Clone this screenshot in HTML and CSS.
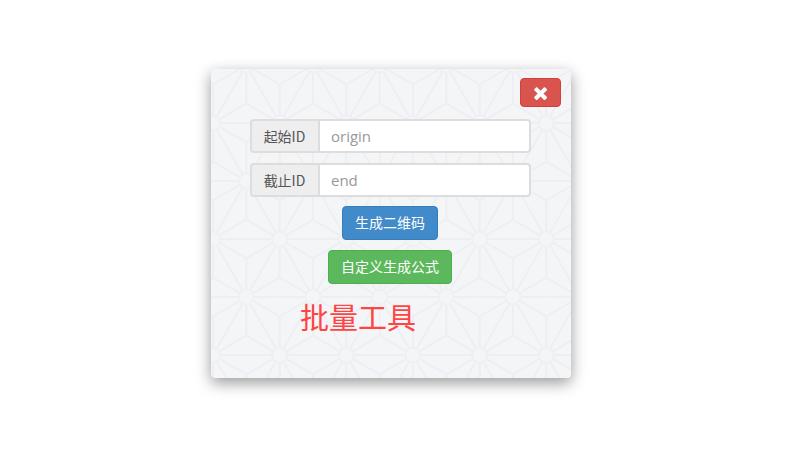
FILE: index.html
```html
<!DOCTYPE html>
<html lang="en">

<head>
    <meta charset="UTF-8">
    <meta name="viewport" content="width=device-width, initial-scale=1">
    <title>批量工具</title>
    <link rel="stylesheet" href="styles.css">
</head>

<body>

    <div class="modal">
        <div class="modal-head">
            <button type="button" class="btn btn-close" aria-label="close">
                <svg class="icon-times" viewBox="282 256 1208 1300" width="13" height="14" aria-hidden="true">
                    <path fill="#fff" d="M1490 1322q0 40-28 68l-136 136q-28 28-68 28t-68-28l-294-294-294 294q-28 28-68 28t-68-28l-136-136q-28-28-28-68t28-68l294-294-294-294q-28-28-28-68t28-68l136-136q28-28 68-28t68 28l294 294 294-294q28-28 68-28t68 28l136 136q28 28 28 68t-28 68l-294 294 294 294q28 28 28 68z" />
                </svg>
            </button>
        </div>

        <form class="id-form">
            <div class="input-group">
                <label class="addon" for="origin">起始ID</label>
                <input type="text" id="origin" placeholder="origin" />
            </div>
            <div class="input-group">
                <label class="addon" for="end">截止ID</label>
                <input type="text" id="end" placeholder="end" />
            </div>
            <button type="button" class="btn btn-blue">生成二维码</button>
            <button type="button" class="btn btn-green">自定义生成公式</button>
        </form>

        <h2 class="tool-title">批量工具</h2>
    </div>

</body>

</html>
```

FILE: styles.css
```css
* {
    box-sizing: border-box;
}

body {
    margin: 0;
    height: 453px;
    background-color: #fff;
    font-family: "Noto Sans CJK SC", "Open Sans", sans-serif;
    display: flex;
    justify-content: center;
    padding: 69px 18px 0 0;
}

.modal {
    width: 360px;
    height: 309px;
    padding: 9px 10px 0 39px;
    border-radius: 4px;
    background-color: #f4f5f7;
    background-image: url("data:image/svg+xml,%3Csvg xmlns='http://www.w3.org/2000/svg' xmlns:xlink='http://www.w3.org/1999/xlink' width='200' height='116' viewBox='0 0 200 116'%3E%3Cdefs%3E%3Cg id='t' fill='none' stroke='%23eeeff2' stroke-width='2'%3E%3Cpath d='M0 0H66.67M0 58H66.67M0 116H66.67M0 0L33.33 58L66.67 0M0 116L33.33 58L66.67 116M33.33 19.33V58M33.33 19.33L0 0M33.33 19.33L66.67 0M33.33 96.67V58M33.33 96.67L0 116M33.33 96.67L66.67 116M0 38.67V0M0 38.67L33.33 58M66.67 38.67V0M66.67 38.67L33.33 58M0 77.33V116M0 77.33L33.33 58M66.67 77.33V116M66.67 77.33L33.33 58'/%3E%3C/g%3E%3Cg id='c' fill='%23f4f5f7' stroke='%23eeeff2' stroke-width='1.5'%3E%3Ccircle cx='0' cy='0' r='7.5'/%3E%3Ccircle cx='66.67' cy='0' r='7.5'/%3E%3Ccircle cx='33.33' cy='58' r='7.5'/%3E%3Ccircle cx='0' cy='116' r='7.5'/%3E%3Ccircle cx='66.67' cy='116' r='7.5'/%3E%3C/g%3E%3C/defs%3E%3Cuse xlink:href='%23t'/%3E%3Cuse xlink:href='%23t' x='66.67'/%3E%3Cuse xlink:href='%23t' x='133.33'/%3E%3Cuse xlink:href='%23c'/%3E%3Cuse xlink:href='%23c' x='66.67'/%3E%3Cuse xlink:href='%23c' x='133.33'/%3E%3C/svg%3E");
    background-position: 2px 54px;
    box-shadow: 0 5px 15px rgba(0, 0, 0, 0.4);
}

.modal-head {
    display: flex;
    justify-content: flex-end;
    margin-bottom: 12px;
}

.btn {
    height: 34px;
    padding: 0 12px;
    border: 1px solid transparent;
    border-radius: 4px;
    color: #fff;
    font-family: inherit;
    font-size: 14px;
    line-height: 1;
    cursor: pointer;
}

.btn-close {
    width: 41px;
    height: 29px;
    padding: 0;
    display: flex;
    align-items: center;
    justify-content: center;
    background-color: #d9534f;
    border-color: #d43f3a;
}

.btn-blue {
    margin: -1px 1px 0 0;
    padding-bottom: 2px;
    background-color: #428bca;
    border-color: #357ebd;
}

.btn-green {
    margin-right: 1px;
    padding-bottom: 2px;
    background-color: #5cb85c;
    border-color: #4cae4c;
}

.id-form {
    width: 281px;
    display: flex;
    flex-direction: column;
    align-items: center;
    gap: 10px;
}

.input-group {
    width: 100%;
    height: 34px;
    display: flex;
}

.addon {
    width: 69px;
    padding-right: 1px;
    display: flex;
    align-items: center;
    justify-content: center;
    border: 2px solid #ddd;
    border-right-width: 1px;
    border-radius: 4px 0 0 4px;
    background-color: #eee;
    color: #555;
    font-size: 14px;
}

.input-group input {
    flex: 1;
    min-width: 0;
    padding: 0 11px;
    border: 2px solid #ddd;
    border-left-width: 1px;
    border-radius: 0 4px 4px 0;
    background-color: #fff;
    color: #555;
    font-family: "Open Sans", sans-serif;
    font-size: 15px;
}

.input-group input::placeholder {
    color: #999;
    opacity: 1;
}

.tool-title {
    margin: 11px 0 0 50px;
    color: #ff4444;
    font-size: 29px;
    font-weight: 400;
    line-height: 42px;
}
```
